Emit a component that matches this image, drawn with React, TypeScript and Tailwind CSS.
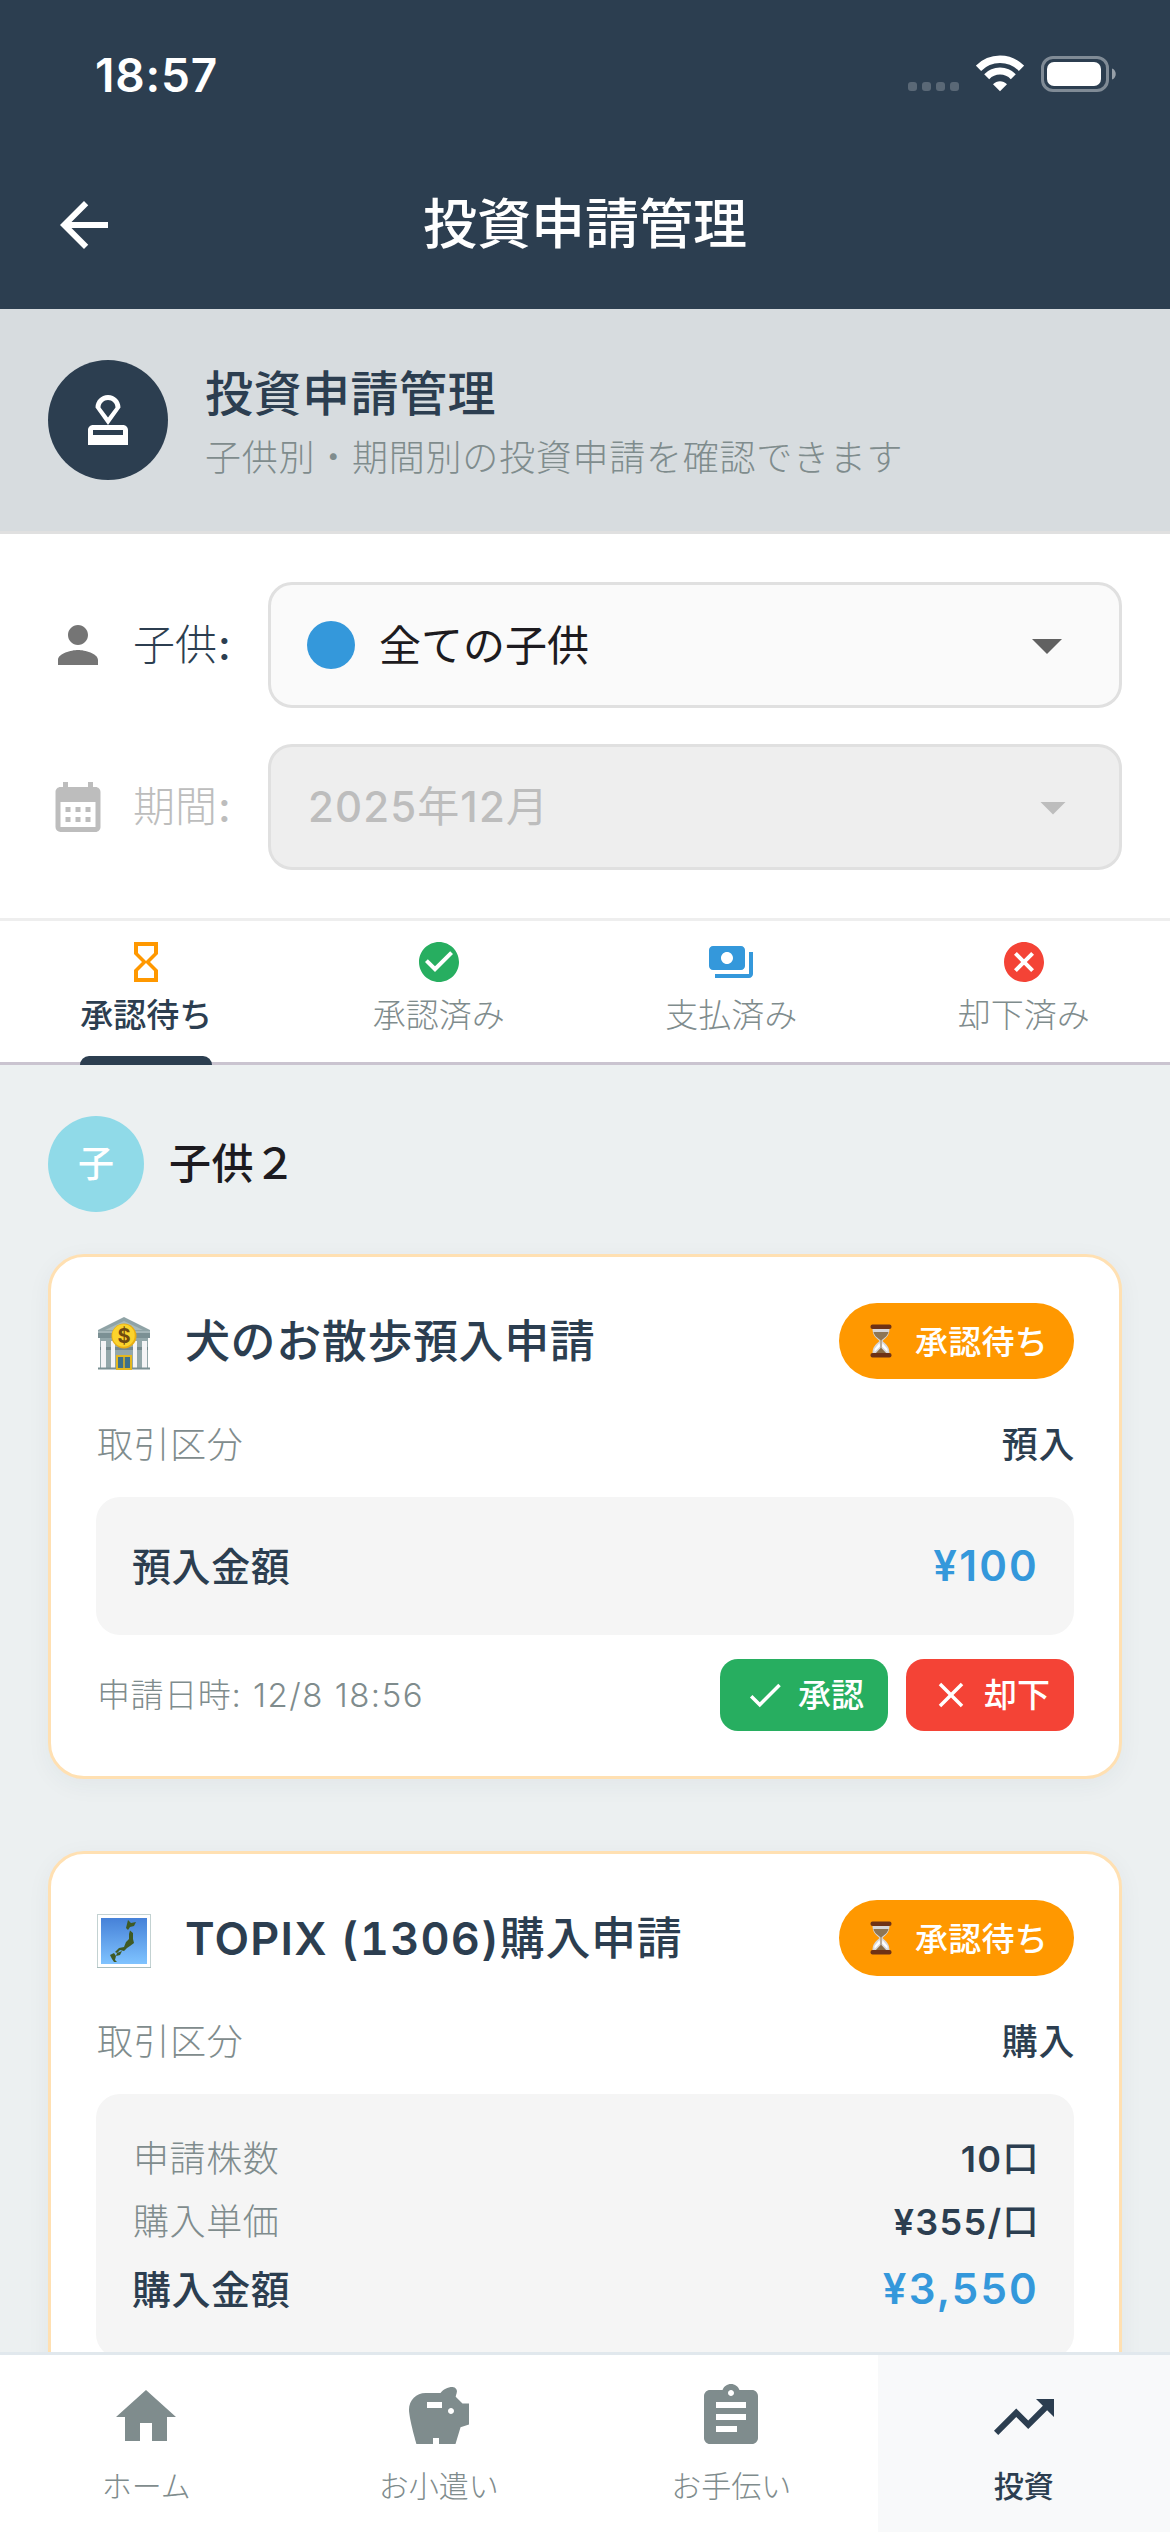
import { clsx } from 'clsx';
import type { ReactNode } from 'react';
import type { IconType } from 'react-icons';
import {
  MdArrowBack,
  MdArrowDropDown,
  MdAssignment,
  MdCalendarMonth,
  MdCancel,
  MdCheck,
  MdCheckCircle,
  MdClose,
  MdHome,
  MdHourglassEmpty,
  MdOutlineApproval,
  MdPayments,
  MdPerson,
  MdSavings,
  MdTrendingUp,
} from 'react-icons/md';

const tabs = [
  { label: '承認待ち', icon: MdHourglassEmpty, color: 'text-[#ff9800]' },
  { label: '承認済み', icon: MdCheckCircle, color: 'text-[#27ae60]' },
  { label: '支払済み', icon: MdPayments, color: 'text-[#3498db]' },
  { label: '却下済み', icon: MdCancel, color: 'text-[#f44336]' },
];

const navItems: { label: string; icon: IconType }[] = [
  { label: 'ホーム', icon: MdHome },
  { label: 'お小遣い', icon: MdSavings },
  { label: 'お手伝い', icon: MdAssignment },
  { label: '投資', icon: MdTrendingUp },
];

const StatusBar = () => (
  <div className="flex h-[141px] items-start justify-between pt-[50px] pr-[53px] pl-[95px] text-white">
    <span className="text-[46px] leading-[50px] font-semibold tracking-[0.8px]">18:57</span>
    <div className="flex pt-[5px]">
      <svg width="52" height="38" viewBox="0 0 52 38" fill="#fff" fillOpacity="0.22">
        <rect x="0" y="27" width="9" height="9" rx="3" />
        <rect x="14" y="27" width="9" height="9" rx="3" />
        <rect x="28" y="27" width="9" height="9" rx="3" />
        <rect x="42" y="27" width="9" height="9" rx="3" />
      </svg>
      <svg className="ml-4" width="48" height="38" viewBox="0 0 48 38" fill="none" stroke="#fff">
        <path d="M2.5 13.3A30 30 0 0 1 45.5 13.3" strokeWidth="7.4" />
        <path d="M10.7 21.7A18.5 18.5 0 0 1 37.3 21.7" strokeWidth="7" />
        <path d="M24 36.2L17 29.2C20.9 25.3 27.1 25.3 31 29.2Z" fill="#fff" stroke="none" />
      </svg>
      <svg className="ml-[17px]" width="76" height="38" viewBox="0 0 76 38" fill="none">
        <rect x="1.5" y="2.5" width="65" height="33" rx="10.5" stroke="#fff" strokeOpacity="0.4" strokeWidth="3" />
        <rect x="6" y="7" width="54" height="24" rx="7" fill="#fff" />
        <path d="M71 13.5C76 15 76 23 71 24.5Z" fill="#fff" fillOpacity="0.5" />
      </svg>
    </div>
  </div>
);

const AppBar = () => (
  <div className="flex h-[168px] items-center px-12 text-white">
    <MdArrowBack className="size-[72px]" />
    <h1 className="flex-1 pr-[72px] text-center text-[54px] leading-none font-medium">投資申請管理</h1>
  </div>
);

const Banner = () => (
  <section className="flex h-[225px] items-center gap-[37px] border-b-3 border-[#e0e0e0] bg-[#d7dcdf] px-12">
    <div className="flex size-[120px] items-center justify-center rounded-full bg-[#2c3e50]">
      <MdOutlineApproval className="size-[60px] text-white" />
    </div>
    <div className="flex flex-col pt-[7px] text-nowrap">
      <h2 className="text-[48px] leading-[68px] font-medium tracking-[0.5px]">投資申請管理</h2>
      <p className="text-[36px] leading-[60px] font-light tracking-[0.75px] text-[#7f8c8d]">
        子供別・期間別の投資申請を確認できます
      </p>
    </div>
  </section>
);

const FilterLabel = ({ children }: { children: ReactNode }) => (
  <span className="w-[160px] pl-[25px] text-[42px] leading-none font-light">
    {children}
    <span className="pl-px font-medium">:</span>
  </span>
);

const Filters = () => (
  <section className="flex flex-col gap-9 border-b-3 border-[#eeeeee] bg-white p-12">
    <div className="flex items-center">
      <MdPerson className="size-[60px] text-[#757575]" />
      <FilterLabel>子供</FilterLabel>
      <div className="flex h-[126px] flex-1 items-center rounded-3xl border-3 border-[#e0e0e0] bg-[#fafafa] px-9">
        <span className="size-12 rounded-full bg-[#3498db]" />
        <span className="flex-1 pt-[2px] pl-6 text-[42px] leading-none text-[#1d1b20]">全ての子供</span>
        <MdArrowDropDown className="size-[72px] text-[#616161]" />
      </div>
    </div>
    <div className="flex items-center text-[#bdbdbd]">
      <MdCalendarMonth className="size-[60px]" />
      <FilterLabel>期間</FilterLabel>
      <div className="flex h-[126px] flex-1 items-center rounded-3xl border-3 border-[#e0e0e0] bg-[#eeeeee] px-9">
        <span className="flex-1 pl-px text-[42px] leading-none font-medium tracking-[1.1px]">
          2025<span className="font-normal">年</span>12<span className="font-normal">月</span>
        </span>
        <MdArrowDropDown className="size-[60px]" />
      </div>
    </div>
  </section>
);

const Tabs = () => (
  <div className="flex h-[144px] border-b-3 border-[#cac4d0] bg-white">
    {tabs.map(({ label, icon: Icon, color }, i) => (
      <button key={label} className="relative flex flex-1 flex-col items-center pt-[17px]">
        <Icon className={clsx('size-12', color)} />
        <span
          className={clsx(
            'pt-[9px] text-[33px] leading-[40px]',
            i === 0 ? 'font-medium' : 'font-light text-[#7f8c8d]'
          )}
        >
          {label}
        </span>
        {i === 0 && <span className="absolute -bottom-[3px] h-[9px] w-[132px] rounded-t-[9px] bg-[#2c3e50]" />}
      </button>
    ))}
  </div>
);

const BankIcon = () => (
  <svg width="54" height="54" viewBox="0 0 54 54">
    <path d="M27 0L53 13V20H1V13Z" fill="#8fa3a6" />
    <path d="M27 4L46 13H8Z" fill="#a9babc" />
    <rect x="1" y="14" width="52" height="7" fill="#7b9094" />
    <rect x="1" y="14" width="52" height="2" fill="#a4b5b8" />
    <rect x="3" y="21" width="48" height="30" fill="#93a7aa" />
    <rect x="3" y="30" width="48" height="3" fill="#75898d" />
    <rect x="4" y="24" width="5" height="27" fill="#f4f4f6" />
    <rect x="14" y="24" width="4" height="27" fill="#f4f4f6" />
    <rect x="36" y="24" width="4" height="27" fill="#f4f4f6" />
    <rect x="45" y="24" width="5" height="27" fill="#f4f4f6" />
    <rect x="20" y="39" width="14" height="13" fill="#3d708b" stroke="#e3b71f" strokeWidth="2" />
    <path d="M27 39V52" stroke="#e3b71f" strokeWidth="1.5" />
    <path d="M1 51.5H19M35 51.5H53" stroke="#7b9094" strokeWidth="2" />
    <circle cx="27" cy="19" r="12.5" fill="#e8ad12" />
    <circle cx="26.5" cy="18.5" r="11.2" fill="#fbd32c" />
    <text x="27" y="26" textAnchor="middle" fontSize="20" fontWeight="700" fill="#6f4a10">
      $
    </text>
  </svg>
);

const JapanMapIcon = () => (
  <svg width="54" height="54" viewBox="0 0 54 54">
    <defs>
      <linearGradient id="sea" x1="0" y1="0" x2="0" y2="1">
        <stop offset="0" stopColor="#4681d8" />
        <stop offset="1" stopColor="#7fc3ff" />
      </linearGradient>
    </defs>
    <rect x="0.5" y="0.5" width="53" height="53" fill="#fff" stroke="#c3d2d2" />
    <path d="M0 53.5H54" stroke="#a9bdbd" />
    <rect x="4" y="4" width="46" height="46" fill="url(#sea)" />
    <g fill="#3f5a24">
      <path d="M31 6L34 9L39 8L37 12L33 13L31 16L29 14L30 10Z" />
      <path d="M33 16.5L36 19L36 25L37 29L33 32L30 34L27 37L23 36L20 39L18 38L22 34L27 33L29 28L32 25L32 20Z" />
      <path d="M20 39L25 37L23 41L19 42Z" />
      <path d="M13 41L17 39L19 42L18 46L20 48L17 48L15 45Z" />
    </g>
  </svg>
);

const SandTimerIcon = () => (
  <svg width="22" height="34" viewBox="0 0 22 34">
    <path
      d="M2.5 4H19.5C19.5 11 17 13 12.5 17C17 21 19.5 23 19.5 30H2.5C2.5 23 5 21 9.5 17C5 13 2.5 11 2.5 4Z"
      fill="#d7d7d9"
    />
    <path d="M3.5 8H18.5C17.5 12 15 13.5 11 16.5C7 13.5 4.5 12 3.5 8Z" fill="#8e7655" />
    <path d="M10.6 16H11.4V24L17 30H5L10.6 24Z" fill="#8a6a42" />
    <path d="M9.5 19L4.5 25V28L10 22.5ZM12.5 19L17.5 25V28L12 22.5Z" fill="#fff" />
    <rect x="0.5" y="0.5" width="21" height="4.5" rx="2" fill="#6e3216" />
    <rect x="0.5" y="29" width="21" height="4.5" rx="2" fill="#6e3216" />
  </svg>
);

type RequestCardProps = {
  icon: ReactNode;
  title: ReactNode;
  type: string;
  children: ReactNode;
};

const RequestCard = ({ icon, title, type, children }: RequestCardProps) => (
  <article className="rounded-[36px] border-3 border-[#ffe0b2] bg-white px-[45px] pt-[46px] pb-[45px] shadow-[0_6px_24px_rgba(44,62,80,0.05)]">
    <div className="flex h-[76px] items-center">
      <div className="mt-[6px] ml-px">{icon}</div>
      <h3 className="flex-1 pl-[34px] text-[45px] leading-none font-medium tracking-[0.6px]">{title}</h3>
      <div className="flex h-[76px] items-center rounded-full bg-[#ff9800] pr-[26px] pl-[31px] text-white">
        <SandTimerIcon />
        <span className="pt-[2px] pl-[23px] text-[33px] leading-none font-medium tracking-[0.25px]">承認待ち</span>
      </div>
    </div>
    <div className="flex h-[118px] items-center justify-between pt-[14px] text-[36px] leading-none tracking-[0.6px]">
      <span className="pl-px font-light text-[#7f8c8d]">取引区分</span>
      <span className="-mr-px font-medium">{type}</span>
    </div>
    {children}
  </article>
);

const AmountRow = ({ label, value }: { label: string; value: string }) => (
  <div className="flex h-[66px] items-center justify-between">
    <span className="text-[39px] leading-none font-medium tracking-[0.6px]">{label}</span>
    <span className="-mr-px text-[42px] leading-none font-semibold tracking-[2.2px] text-[#3498db]">{value}</span>
  </div>
);

const DetailRow = ({ label, value, unit }: { label: string; value: string; unit: string }) => (
  <div className="mb-[6px] flex h-[57px] items-center justify-between text-[36px] leading-none tracking-[0.6px]">
    <span className="pl-px font-light text-[#7f8c8d]">{label}</span>
    <span className="-mr-px font-medium">
      <span className="font-semibold tracking-[1.3px]">{value}</span>
      {unit}
    </span>
  </div>
);

const BottomNav = () => (
  <nav className="flex h-[180px] shrink-0 border-t-3 border-[#e1e8ed] bg-white">
    {navItems.map(({ label, icon: Icon }) => {
      const active = label === '投資';
      return (
        <button
          key={label}
          className={clsx(
            'flex flex-1 flex-col items-center pt-[26px]',
            active ? 'bg-[#f8f9fa] font-medium' : 'font-light text-[#7f8c8d]'
          )}
        >
          <Icon className="size-[72px]" />
          <span className="pt-[11px] text-[30px] leading-[44px]">{label}</span>
        </button>
      );
    })}
  </nav>
);

const App = () => (
  <div className="flex h-[2532px] w-[1170px] flex-col overflow-hidden bg-[#ecf0f1] font-['Inter','Noto_Sans_CJK_JP',sans-serif] text-[#2c3e50]">
    <header className="bg-[#2c3e50]">
      <StatusBar />
      <AppBar />
    </header>
    <Banner />
    <Filters />
    <Tabs />

    <main className="min-h-0 flex-1 overflow-hidden px-12 pt-[51px]">
      <div className="flex items-center gap-[25px] pb-[42px] text-[#1d1b20]">
        <span className="flex size-24 items-center justify-center rounded-full bg-[#90dae8] text-[36px] leading-none font-medium text-white">
          子
        </span>
        <span className="text-[42px] leading-none font-medium tracking-[0.5px]">子供２</span>
      </div>

      <div className="flex flex-col gap-[72px]">
        <RequestCard icon={<BankIcon />} title="犬のお散歩預入申請" type="預入">
          <div className="rounded-3xl bg-[#f5f5f5] p-9">
            <AmountRow label="預入金額" value="¥100" />
          </div>
          <div className="mt-6 flex items-center">
            <span className="flex-1 pl-px text-[33px] leading-none font-light tracking-[0.6px] text-[#7f8c8d]">
              申請日時<span className="tracking-[1.5px]">: 12/8 18:56</span>
            </span>
            <div className="flex gap-[18px] text-[33px] leading-none font-medium text-white">
              <button className="flex h-[72px] items-center gap-3 rounded-[18px] bg-[#27ae60] px-6">
                <MdCheck className="size-[42px]" />
                承認
              </button>
              <button className="flex h-[72px] items-center gap-3 rounded-[18px] bg-[#f44336] px-6">
                <MdClose className="size-[42px]" />
                却下
              </button>
            </div>
          </div>
        </RequestCard>

        <RequestCard
          icon={<JapanMapIcon />}
          title={
            <>
              <span className="font-semibold tracking-[1.2px] tabular-nums">TOPIX (1306)</span>購入申請
            </>
          }
          type="購入"
        >
          <div className="rounded-3xl bg-[#f5f5f5] p-9">
            <DetailRow label="申請株数" value="10" unit="口" />
            <DetailRow label="購入単価" value="¥355/" unit="口" />
            <AmountRow label="購入金額" value="¥3,550" />
          </div>
        </RequestCard>
      </div>
    </main>

    <BottomNav />
  </div>
);

export default App;
